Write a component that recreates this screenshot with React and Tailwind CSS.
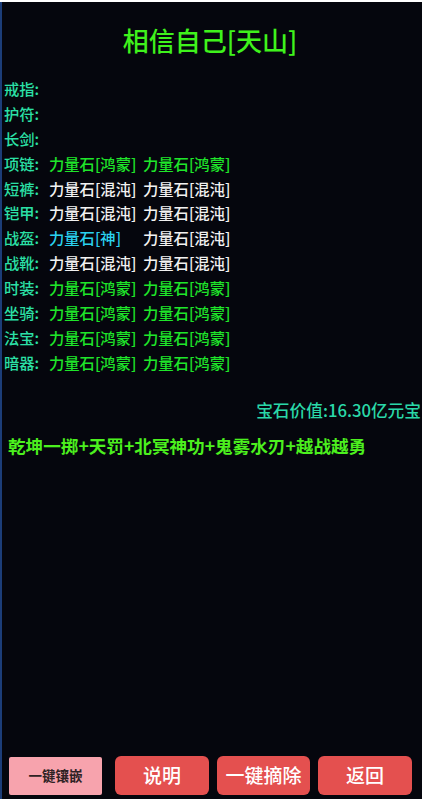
import React from 'react'

const GEMS = [
  { slot: '戒指', gems: [] },
  { slot: '护符', gems: [] },
  { slot: '长剑', gems: [] },
  { slot: '项链', gems: [['力量石[鸿蒙]', 'g'], ['力量石[鸿蒙]', 'g']] },
  { slot: '短裤', gems: [['力量石[混沌]', 'w'], ['力量石[混沌]', 'w']] },
  { slot: '铠甲', gems: [['力量石[混沌]', 'w'], ['力量石[混沌]', 'w']] },
  { slot: '战盔', gems: [['力量石[神]', 'c'], ['力量石[混沌]', 'w']] },
  { slot: '战靴', gems: [['力量石[混沌]', 'w'], ['力量石[混沌]', 'w']] },
  { slot: '时装', gems: [['力量石[鸿蒙]', 'g'], ['力量石[鸿蒙]', 'g']] },
  { slot: '坐骑', gems: [['力量石[鸿蒙]', 'g'], ['力量石[鸿蒙]', 'g']] },
  { slot: '法宝', gems: [['力量石[鸿蒙]', 'g'], ['力量石[鸿蒙]', 'g']] },
  { slot: '暗器', gems: [['力量石[鸿蒙]', 'g'], ['力量石[鸿蒙]', 'g']] },
]

const COLORS = {
  g: 'text-[#1fe62a]',
  w: 'text-[#f2f2f2]',
  c: 'text-[#2ad2f0]',
}

export default function App() {
  return (
    <div className="w-[426px] h-[799px] bg-white pt-[2px] pr-[4px] font-['Noto_Sans_CJK_SC',sans-serif]">
      <div className="h-full bg-[#05060d] border-l-2 border-[#1c3d78] flex flex-col">
        <h1 className="text-center text-[26px] leading-[30px] font-medium text-[#3ff21c] mt-[23px] pr-[4px]">
          相信自己[天山]
        </h1>

        <div className="mt-[21px] pl-[2px] flex flex-col">
          {GEMS.map(row => (
            <div key={row.slot} className="flex items-center h-[24.9px] text-[15.3px] font-medium">
              <span className="w-[45px] text-[#2be0a6]">{row.slot}:</span>
              {row.gems.map(([name, c], i) => (
                <span key={i} className={`w-[94px] ${COLORS[c]}`}>{name}</span>
              ))}
            </div>
          ))}
        </div>

        <div className="mt-[24px] text-right pr-[1px] text-[16.7px] leading-[22px] font-medium text-[#2ad8a8]">
          宝石价值:16.30亿元宝
        </div>

        <div className="mt-[14px] pl-[6px] text-[17.6px] leading-[22px] font-bold text-[#4cf01e]">
          乾坤一掷+天罚+北冥神功+鬼雾水刃+越战越勇
        </div>

        <div className="mt-auto mb-[4px] flex items-center pl-[7px] gap-[8px]">
          <button className="w-[93px] h-[38px] bg-[#f7a3ad] rounded-[2px] text-[13.5px] text-[#2e2224] font-bold mr-[5px]">
            一键镶嵌
          </button>
          <button className="w-[94px] h-[39px] bg-[#e4504f] rounded-[6px] text-[19px] text-white font-medium">
            说明
          </button>
          <button className="w-[93px] h-[39px] bg-[#e4504f] rounded-[6px] text-[19px] text-white font-medium">
            一键摘除
          </button>
          <button className="w-[94px] h-[39px] bg-[#e4504f] rounded-[6px] text-[19px] text-white font-medium">
            返回
          </button>
        </div>
      </div>
    </div>
  )
}
